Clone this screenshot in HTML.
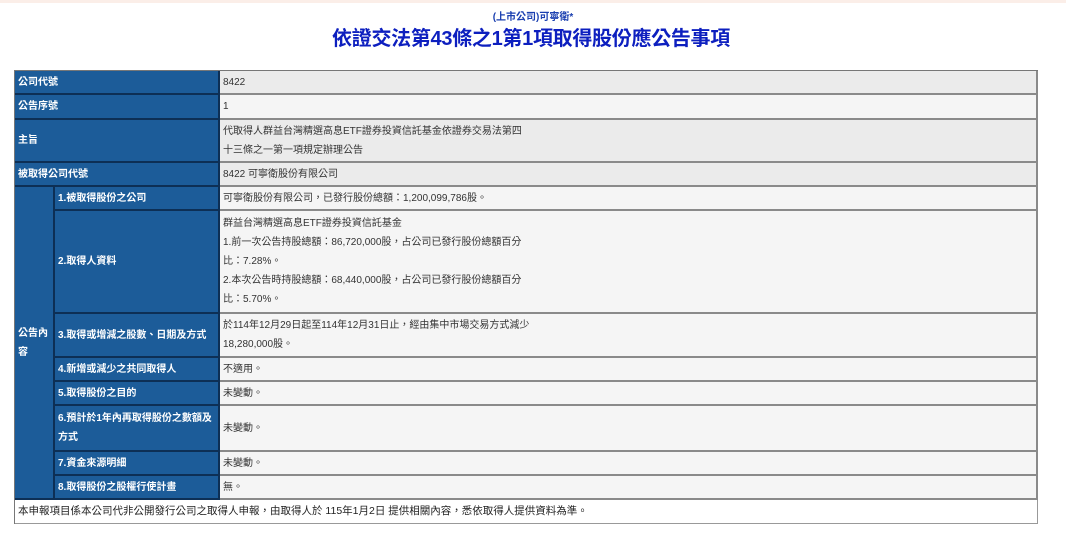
<!DOCTYPE html>
<html><head><meta charset="utf-8"><style>
body{margin:0;width:1066px;height:554px;background:#fff;position:relative;overflow:hidden;font-family:"Liberation Sans","Noto Sans CJK TC",sans-serif;}
.top{position:absolute;left:0;top:0;width:1066px;height:3px;background:#fbeee8;}
.sub{position:absolute;top:8px;left:0;width:1066px;text-align:center;font-size:10px;font-weight:bold;color:#1a3fb0;}
.title{position:absolute;top:22px;left:0;width:1062px;text-align:center;font-size:20px;font-weight:bold;color:#0d1fbf;letter-spacing:-0.3px}
.c{position:absolute;box-sizing:border-box;font-size:10px;display:flex;align-items:center;padding-left:3px;line-height:19px;border-right:2px solid #8a8a8a;border-bottom:2px solid #8a8a8a;}
.l{background:#1c5c99;color:#fff;font-weight:bold;border-color:#0d2f55;}
.v{color:#333;}
.a{background:#ebebeb}.b{background:#f5f5f5}
</style></head><body>
<div class="top"></div>
<div class="sub">(上市公司)可寧衛*</div>
<div class="title">依證交法第43條之1第1項取得股份應公告事項</div>
<div style="position:absolute;left:15px;top:70px;width:1023px;height:1px;background:#777"></div>
<div style="position:absolute;left:14px;top:70px;width:1px;height:454px;background:#777"></div>
<div class="c l" style="left:15px;top:71px;width:205px;height:24px">公司代號</div>
<div class="c v a" style="left:220px;top:71px;width:818px;height:24px">8422</div>
<div class="c l" style="left:15px;top:95px;width:205px;height:25px">公告序號</div>
<div class="c v b" style="left:220px;top:95px;width:818px;height:25px">1</div>
<div class="c l" style="left:15px;top:120px;width:205px;height:43px">主旨</div>
<div class="c v a" style="left:220px;top:120px;width:818px;height:43px">代取得人群益台灣精選高息ETF證券投資信託基金依證券交易法第四<br>十三條之一第一項規定辦理公告</div>
<div class="c l" style="left:15px;top:163px;width:205px;height:24px">被取得公司代號</div>
<div class="c v a" style="left:220px;top:163px;width:818px;height:24px">8422 可寧衛股份有限公司</div>
<div class="c l" style="left:15px;top:187px;width:40px;height:313px">公告內<br>容</div>
<div class="c l" style="left:55px;top:187px;width:165px;height:24px">1.被取得股份之公司</div>
<div class="c v b" style="left:220px;top:187px;width:818px;height:24px">可寧衛股份有限公司，已發行股份總額：1,200,099,786股。</div>
<div class="c l" style="left:55px;top:211px;width:165px;height:103px">2.取得人資料</div>
<div class="c v b" style="left:220px;top:211px;width:818px;height:103px">群益台灣精選高息ETF證券投資信託基金<br>1.前一次公告持股總額：86,720,000股，占公司已發行股份總額百分<br>比：7.28%。<br>2.本次公告時持股總額：68,440,000股，占公司已發行股份總額百分<br>比：5.70%。</div>
<div class="c l" style="left:55px;top:314px;width:165px;height:44px">3.取得或增減之股數、日期及方式</div>
<div class="c v b" style="left:220px;top:314px;width:818px;height:44px">於114年12月29日起至114年12月31日止，經由集中市場交易方式減少<br>18,280,000股。</div>
<div class="c l" style="left:55px;top:358px;width:165px;height:24px">4.新增或減少之共同取得人</div>
<div class="c v b" style="left:220px;top:358px;width:818px;height:24px">不適用。</div>
<div class="c l" style="left:55px;top:382px;width:165px;height:24px">5.取得股份之目的</div>
<div class="c v b" style="left:220px;top:382px;width:818px;height:24px">未變動。</div>
<div class="c l" style="left:55px;top:406px;width:165px;height:46px">6.預計於1年內再取得股份之數額及<br>方式</div>
<div class="c v b" style="left:220px;top:406px;width:818px;height:46px">未變動。</div>
<div class="c l" style="left:55px;top:452px;width:165px;height:24px">7.資金來源明細</div>
<div class="c v b" style="left:220px;top:452px;width:818px;height:24px">未變動。</div>
<div class="c l" style="left:55px;top:476px;width:165px;height:24px">8.取得股份之股權行使計畫</div>
<div class="c v b" style="left:220px;top:476px;width:818px;height:24px">無。</div>
<div class="c v" style="left:15px;top:500px;width:1023px;height:24px;background:#fff;border-right:1px solid #999;border-bottom:1px solid #999;font-size:10.5px;color:#222">本申報項目係本公司代非公開發行公司之取得人申報，由取得人於 115年1月2日 提供相關內容，悉依取得人提供資料為準。</div>
</body></html>
